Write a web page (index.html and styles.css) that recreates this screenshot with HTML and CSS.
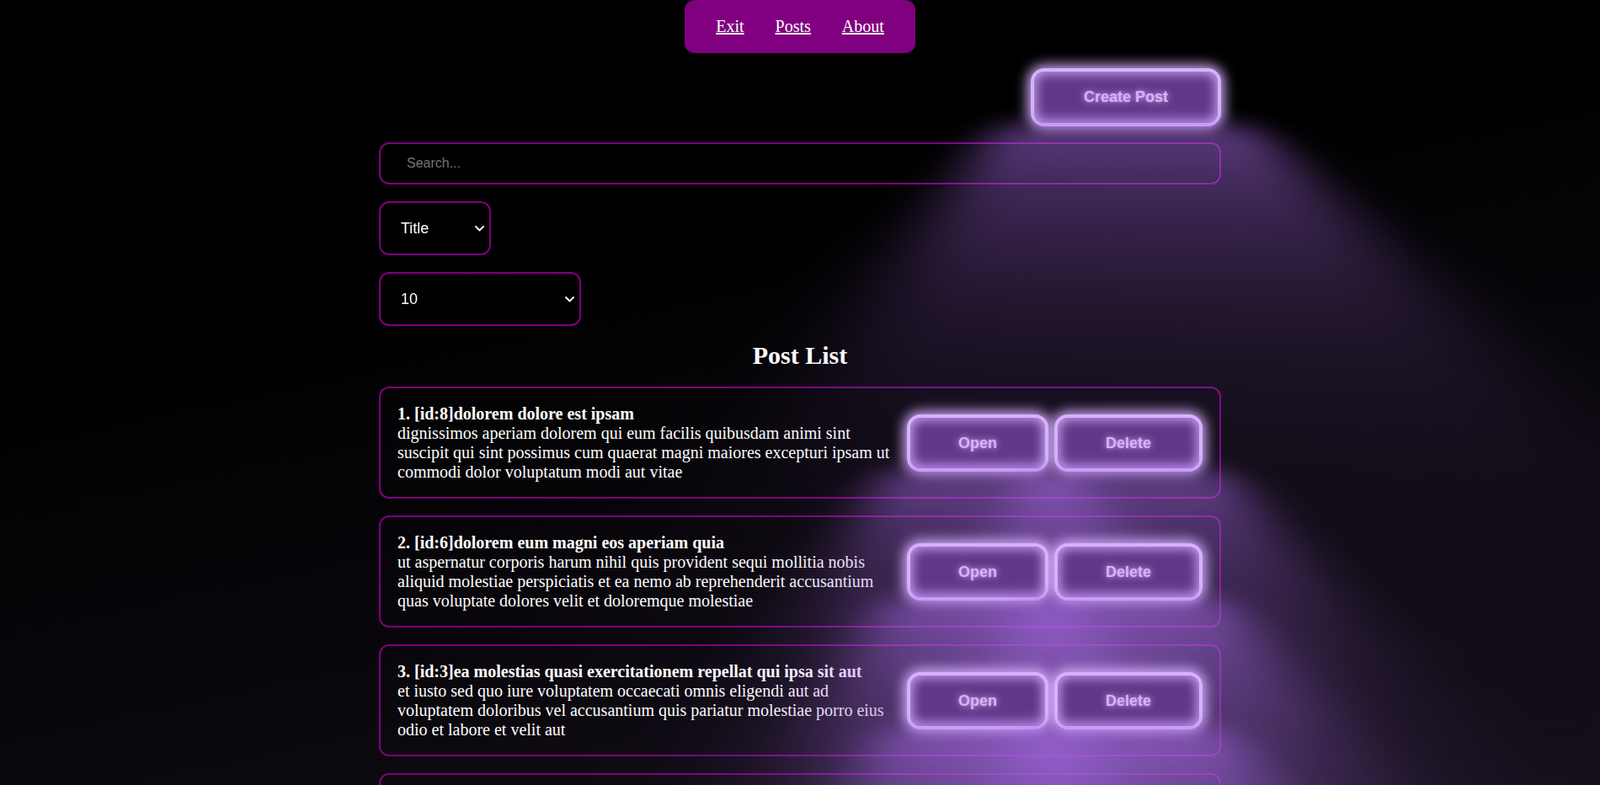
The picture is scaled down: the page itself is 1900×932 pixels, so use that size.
FILE: index.html
```html
<!DOCTYPE html>
<html lang="en">
<head>
<meta charset="utf-8">
<title>Posts</title>
<link rel="stylesheet" href="styles.css">
</head>
<body>
<nav class="navbar">
  <a class="navbar__link" href="#">Exit</a>
  <a class="navbar__link" href="#">Posts</a>
  <a class="navbar__link" href="#">About</a>
</nav>
<main class="app">
  <div class="toolbar">
    <button class="neon-btn neon-btn--wide">Create Post</button>
  </div>
  <input class="search" type="text" placeholder="Search...">
  <div class="select-wrap select-wrap--sort">
    <select class="select">
      <option>Title</option>
      <option>Body</option>
    </select>
    <svg class="select-wrap__icon" width="11" height="7" viewBox="0 0 11 7" aria-hidden="true"><path d="M1 1 L5.5 5.5 L10 1" fill="none" stroke="#fff" stroke-width="1.8" stroke-linecap="round" stroke-linejoin="round"/></svg>
  </div>
  <div class="select-wrap select-wrap--limit">
    <select class="select">
      <option>10</option>
      <option>25</option>
      <option>50</option>
      <option>Show all</option>
    </select>
    <svg class="select-wrap__icon" width="11" height="7" viewBox="0 0 11 7" aria-hidden="true"><path d="M1 1 L5.5 5.5 L10 1" fill="none" stroke="#fff" stroke-width="1.8" stroke-linecap="round" stroke-linejoin="round"/></svg>
  </div>
  <h2 class="list-title">Post List</h2>
  <div class="post">
    <div class="post__content">
      <strong>1. [id:8]dolorem dolore est ipsam</strong>
      <div>dignissimos aperiam dolorem qui eum facilis quibusdam animi sint suscipit qui sint possimus cum quaerat magni maiores excepturi ipsam ut commodi dolor voluptatum modi aut vitae</div>
    </div>
    <div class="post__btns">
      <button class="neon-btn">Open</button>
      <button class="neon-btn">Delete</button>
    </div>
  </div>
  <div class="post">
    <div class="post__content">
      <strong>2. [id:6]dolorem eum magni eos aperiam quia</strong>
      <div>ut aspernatur corporis harum nihil quis provident sequi mollitia nobis aliquid molestiae perspiciatis et ea nemo ab reprehenderit accusantium quas voluptate dolores velit et doloremque molestiae</div>
    </div>
    <div class="post__btns">
      <button class="neon-btn">Open</button>
      <button class="neon-btn">Delete</button>
    </div>
  </div>
  <div class="post">
    <div class="post__content">
      <strong>3. [id:3]ea molestias quasi exercitationem repellat qui ipsa sit aut</strong>
      <div>et iusto sed quo iure voluptatem occaecati omnis eligendi aut ad voluptatem doloribus vel accusantium quis pariatur molestiae porro eius odio et labore et velit aut</div>
    </div>
    <div class="post__btns">
      <button class="neon-btn">Open</button>
      <button class="neon-btn">Delete</button>
    </div>
  </div>
  <div class="post">
    <div class="post__content">
      <strong>4. [id:4]eum et est occaecati</strong>
      <div>ullam et saepe reiciendis voluptatem adipisci sit amet autem assumenda provident rerum culpa quis hic commodi nesciunt rem tenetur doloremque ipsam iure quis sunt voluptatem rerum illo velit</div>
    </div>
    <div class="post__btns">
      <button class="neon-btn">Open</button>
      <button class="neon-btn">Delete</button>
    </div>
  </div>
</main>
</body>
</html>
```

FILE: styles.css
```css
html {
  overflow: hidden;
}

body {
  margin: 0;
  min-height: 100vh;
  font-family: "Liberation Serif", "Times New Roman", serif;
  font-size: 20px;
  color: #fff;
  background: linear-gradient(168deg, #000 30%, #16101c 100%);
  background-color: #000;
}

.navbar {
  width: fit-content;
  margin: 0 auto;
  height: 63px;
  padding: 0 37px;
  box-sizing: border-box;
  display: flex;
  align-items: center;
  gap: 37px;
  background: #800080;
  border-radius: 12px;
}

.navbar__link {
  color: #fff;
  font-size: 20px;
  text-decoration: underline;
}

.app {
  width: 1000px;
  margin: 0 auto;
  display: flex;
  flex-direction: column;
  align-items: flex-start;
}

.toolbar {
  align-self: stretch;
  display: flex;
  justify-content: flex-end;
  margin-top: 18px;
}

.neon-btn {
  --neon: #d7b1ff;
  position: relative;
  font-family: "Liberation Sans", Arial, sans-serif;
  font-weight: bold;
  font-size: 18px;
  line-height: 20px;
  color: var(--neon);
  background: #603889;
  border: 4px solid var(--neon);
  border-radius: 16px;
  padding: 20px 57px;
  cursor: pointer;
  text-shadow: 0 0 0.125em rgba(255, 255, 255, 0.3), 0 0 0.45em currentColor;
  box-shadow: inset 0 0 0.7em 0.15em rgba(215, 177, 255, 0.85), 0 0 0.8em 0.2em var(--neon);
}

.neon-btn--wide {
  padding: 20px 59px;
  line-height: 21px;
}

/* floor reflection of the neon light */
.neon-btn::before {
  pointer-events: none;
  content: "";
  position: absolute;
  top: 104%;
  left: -20%;
  width: 140%;
  height: 260px;
  transform-origin: 40% 0;
  transform: perspective(300px) rotateX(60deg);
  background: linear-gradient(to bottom,
    rgba(165, 105, 228, 0.6) 0%,
    rgba(165, 105, 228, 0.46) 25%,
    rgba(165, 105, 228, 0.27) 62%,
    rgba(165, 105, 228, 0.16) 77%,
    rgba(165, 105, 228, 0.08) 90%,
    rgba(165, 105, 228, 0) 100%);
  filter: blur(26px);
}

.search {
  align-self: stretch;
  margin-top: 19px;
  height: 50px;
  box-sizing: border-box;
  padding: 0 31px;
  font-family: "Liberation Sans", Arial, sans-serif;
  font-size: 16px;
  color: #fff;
  background: transparent;
  border: 2px solid #800080;
  border-radius: 12px;
  outline: none;
}

.search::placeholder {
  color: #757575;
}

.select-wrap {
  position: relative;
  margin-top: 20px;
}

.select-wrap--sort {
  width: 133px;
}

.select-wrap--limit {
  width: 240px;
}

.select {
  display: block;
  width: 100%;
  height: 64px;
  box-sizing: border-box;
  padding: 0 28px 0 24px;
  font-family: "Liberation Sans", Arial, sans-serif;
  font-size: 18px;
  color: #fff;
  background: transparent;
  border: 2px solid #800080;
  border-radius: 12px;
  outline: none;
  appearance: none;
  -webkit-appearance: none;
}

.select option {
  background: #000;
  color: #fff;
}

.select-wrap__icon {
  position: absolute;
  right: 8px;
  top: 50%;
  margin-top: -3px;
  pointer-events: none;
}

.list-title {
  align-self: stretch;
  text-align: center;
  font-size: 30px;
  line-height: 34px;
  margin: 18px 0 20px;
}

.post {
  align-self: stretch;
  display: flex;
  align-items: center;
  gap: 20px;
  padding: 19px 20px 18px;
  margin-bottom: 20px;
  border: 2px solid #800080;
  border-radius: 12px;
  line-height: 23px;
}

.post__content {
  flex: 1;
}

.post__btns {
  display: flex;
  gap: 7px;
}
```
